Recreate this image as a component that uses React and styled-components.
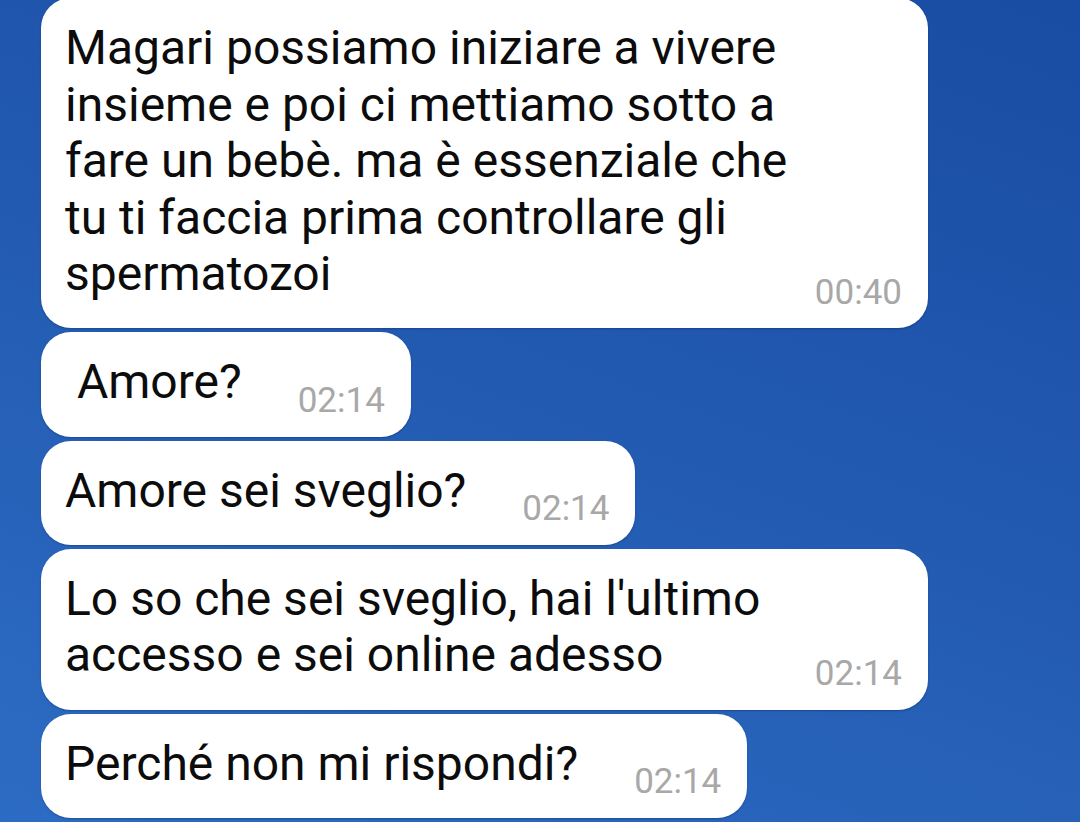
import React from 'react';
import styled, { createGlobalStyle } from 'styled-components';

const GlobalStyle = createGlobalStyle`
  html, body {
    margin: 0;
    padding: 0;
  }
  body {
    font-family: Roboto, 'Noto Sans', sans-serif;
    background: #2260b5;
  }
`;

const ChatScreen = styled.div`
  width: 1080px;
  height: 822px;
  overflow: hidden;
  box-sizing: border-box;
  padding-left: 41px;
  background: linear-gradient(200deg, #194ca3 0%, #2259b0 45%, #2d6cc4 100%);
`;

const MessageList = styled.div`
  display: flex;
  flex-direction: column;
  align-items: flex-start;
  gap: 4px;
  margin-top: -2px;
`;

const Bubble = styled.div`
  display: flex;
  align-items: flex-end;
  justify-content: space-between;
  box-sizing: border-box;
  width: ${(p) => (p.$wide ? '887px' : 'auto')};
  padding: 22px 26px 18.5px 24px;
  background: #fff;
  border-radius: 30px;
  box-shadow: 0 1px 2px rgba(10, 30, 80, 0.35);
`;

const MessageText = styled.div`
  flex-shrink: 0;
  white-space: pre;
  font-size: 48px;
  line-height: 56.5px;
  color: #0c0c0c;
  padding-bottom: 7.3px;
`;

const Time = styled.span`
  flex-shrink: 0;
  margin-left: ${(p) => (p.$wide ? '12px' : '56px')};
  font-size: 35px;
  line-height: 35px;
  color: #a8a8a8;
`;

const messages = [
  {
    text:
      'Magari possiamo iniziare a vivere\ninsieme e poi ci mettiamo sotto a\nfare un bebè. ma è essenziale che\ntu ti faccia prima controllare gli\nspermatozoi',
    time: '00:40',
    wide: true,
  },
  { text: ' Amore?', time: '02:14' },
  { text: 'Amore sei sveglio?', time: '02:14' },
  {
    text: "Lo so che sei sveglio, hai l'ultimo\naccesso e sei online adesso",
    time: '02:14',
    wide: true,
  },
  { text: 'Perché non mi rispondi?', time: '02:14' },
];

function App() {
  return (
    <>
      <GlobalStyle />
      <ChatScreen>
        <MessageList>
          {messages.map((m, i) => (
            <Bubble key={i} $wide={m.wide}>
              <MessageText>{m.text}</MessageText>
              <Time $wide={m.wide}>{m.time}</Time>
            </Bubble>
          ))}
        </MessageList>
      </ChatScreen>
    </>
  );
}

export default App;
